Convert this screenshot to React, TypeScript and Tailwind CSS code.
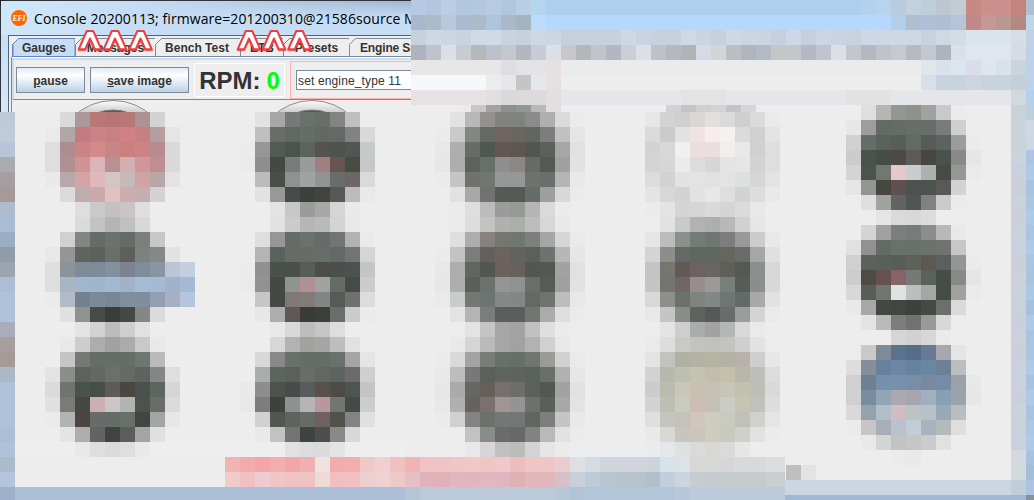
import React from "react";

const CELL = 15;

type Band = [x: number, y: number, colors: string];

// Builds one band per line. "-" leaves a cell empty, "color*n" repeats a colour.
const block = (x: number, y: number, text: string): Band[] =>
  text
    .trim()
    .split("\n")
    .map((line, i): Band => [x, y + i * CELL, line.trim()]);

const panelBands: Band[] = [
  ...block(0, 112, `
bdc9d9
c0cbd8
b8c5d9
aaabb1
a79ea2
a69a98
adbbce
a8bcd4
9cacc2
919da6
9aa5af
adbdd5
afc2d9
afc2da
abacb9
a79ea0
a69a98
adb8c7
afc2da
afc2da
afc2da
acbed5
afc2da eeeeee*26
a9bbcc
b3c4dc
9eb0ca abc0d6*26 b4c5d7 bbcada*9 b6c8d8 b0c4d6 b3c5d8*6 b6c8d9 bbcbdb*8`),
  ...block(45, 112, `
- d9d9d9 ac9896 b87878 b87474 ba7777 ae9193 d3d3d3 -
eaeaea b0a8a8 c37d80 cc8286 c88082 ce8285 c77f80 b59ea0 e5e5e5
dedede ae8c90 ca8486 d48a8b c68587 cd7f7e cb8385 b98b8e d9d9d9
dedede b09193 d19294 d9b5b9 ba9192 d3afb2 d09698 be8e90 d9d9d9
e9e9e9 b5aaa9 d3a3a5 ddb9bd d3c4c6 c5bab8 d0a3a5 b9a6a7 e3e3e3
- dadada beadaf cda8ab e3c0c1 ccaeb0 c3afb1 d3d3d3 -
- - dedede c9c9c7 c5bfbf cac5c4 dedede - -
- - dadada c3c3c3 b4b4b4 c0c0c0 d8d8d8 - -
- d0d0d0 838583 656c66 6b726d 656b66 7c7f7a c7c7c7 -
e8e8e8 959595 5f645f 5c615b 686e69 5b605b 7e8181 868886 e2e2e2
dedede 8c949a 7e8b99 7d8b98 82909f 7c8290 7f8d9a 8896a2 bac6d5 c3cfe0
dedede a8b5c2 a3b6d0 a1b5c8 a3b8d1 a0b3c7 a6bbd4 a6bbd3 a1b2c9 a3b9d5
ebebeb b3bac8 748290 7c8999 778797 808f9e 7f8e9c 959fb2 a5b1c2 b4c5dd
- e0e0e0 909290 474c48 393d39 474845 858785 dbdbdb -
- - e3e3e3 d2d2d2 bcbcbc cfcfcf e1e1e1 - -
- e9e9e9 cdcdcd adadad a1a3a2 ababab c9c9c9 e9e9e9 -
- c5c5c5 757874 666d68 666d68 666d68 6f7570 bababa -
e3e3e3 8c8e8c 5c625d 636863 6b706a 646b66 5d635e 858786 dedede
dbdbdb 70736f 4a524d 464e4a 605b59 4b4740 4a524d 5d6560 d5d5d5
e0e0e0 787b77 434843 ccafb2 cdc4c6 b1b4b3 4c524d 6a6c69 dadada
ebebeb b3b3b3 4c4541 686b67 656d68 687069 414641 a3a5a4 e7e7e7
- e4e4e4 adadad 616463 3f4440 5c5d5c a4a4a4 e0e0e0 -
- - e9e9e9 dedede dadada dedede e9e9e9`),
  ...block(240, 112, `
- e2e2e2 a6a6a6 777978 6a716c 676e69 828481 bfbfbf ececec
- bfbfbf 6a6c69 616763 656b66 626864 636964 818281 d9d9d9
ebebeb 969696 535955 4c534e 5c625e 55534e 4d544f 505651 c5c9c8
eaeaea 8e8e8e 434944 777e7a 9a9c9b a07f82 665552 464b44 c7c7c7
- bcbcbc 484d48 8e9391 9fa3a2 909594 696c6a 6c6664 dadada
- e2e2e2 979999 474c48 3b403b 3f443f 575856 bbbbbb e9e9e9
- - e4e4e4 c7c7c7 9b9b9b a7a7a7 d5d5d5 e9e9e9 -
- - e2e2e2 cbcbcb b6b6b6 bababa d4d4d4 e8e8e8 -
- dedede 969696 656b66 6b726e 666d68 727473 b2b2b2 eaeaea
- b4b4b4 5b625d 666c67 686c65 676e69 636965 737473 d5d5d5
ebebeb 909090 4a514c 494f4b 575d59 4e4d46 4a504b 4c524d c5c5c5
eaeaea 929292 444944 8f9493 b09193 a1a3a2 656c67 474b47 cccccc
- c6c6c6 444944 827876 827b77 808684 555b56 6f716f dcdcdc
- e7e7e7 adadad 5d5855 373c37 3a3f3a 6b6d6b cbcbcb ebebeb
- - e8e8e8 d9d9d9 bdbdbd c6c6c6 dedede - -
- - d7d7d7 b2b2b2 a1a3a0 a5a6a4 bebebe e1e1e1 -
- d8d8d8 888888 67706b 656d68 666d68 6a716c a5a5a5 e5e5e5
- abadac 5d635e 5a605b 686d66 626760 5d645f 6a6b6a cfcfcf
e9e9e9 8d8d8d 4c524d 474c48 5a5b5c 58504b 4c4b45 4e544f c4c4c4
e8e8e8 7d7d7e 3d423e 8d9291 b5b5b6 b8989b 707671 464a45 cdcdcd
- d1d1d1 545652 5d635e 656c67 6f6161 51514b 828483 e0e0e0
- e9e9e9 c2c2c2 727471 3e433f 4c4f4c 8b8886 d8d8d8 -
- - - e1e1e1 dcdcdc dbdbdb e4e4e4 - -`),
  ...block(435, 112, `
- e2e2e2 b8b8b8 92918f 838280 7f827e 8a8c89 afafaf dadada ebebeb
ebebeb c9c9c9 838682 656865 706462 686661 606661 7c7e7d c1c1c1 e5e5e5
e8e8e8 aeaeae 666d68 505650 635754 5e5751 51564f 5a605b a6a6a6 e1e1e1
e7e7e7 adadad 5c625d 686f6a 8f8e8c 8b8785 686a66 545954 9fa19f e2e2e2
ebebeb c5c5c5 70726e 707772 949998 939897 6c736e 696f6a b4b6b5 e9e9e9
- e1e1e1 a8a8a8 70736f 555a55 545953 666c67 9f9e9e d8d8d8 ebebeb
- ebebeb dedede bcbcbc 9a9c99 979997 b5b5b5 dadada ebebeb -
- ebebeb dcdcdc c3c3c3 b0b0b0 acaeab bdbdbd d7d7d7 e9e9e9 -
- dfdfdf adadad 878280 757672 707671 7d807d a4a6a3 d6d6d6 eaeaea
ebebeb c3c3c3 7b7d7b 62605b 6c625e 63635d 5a605b 6d736e b6b8b7 e6e6e6
e8e8e8 adadad 606661 525751 6b615e 68605c 535751 545851 a1a3a0 e1e1e1
e7e7e7 aeaeae 595f59 6c736f 959595 8e9290 686e69 565b54 9fa19e e2e2e2
eaeaea c8cccb 747772 6e7473 848988 828886 636a64 70736f bdbdbd e8e8e8
- e3e3e3 b4b4b4 7b7d7b 595f5a 595f5a 717470 ababab dedede ebebeb
- - e3e3e3 c5c5c5 a6a6a6 a2a3a2 c1c1c1 dfdfdf ebebeb -
- e9e9e9 d5d5d5 bababa a5a6a5 a1a3a0 b2b2b2 d0d0d0 e8e8e8 -
ebebeb d9d9d9 a3a3a3 787b77 67706b 666e69 6f7571 999b97 d1d1d1 eaeaea
e9e9e9 bdbdbd 777877 5b605b 60645f 5e635e 5b615c 696f6a b1b1b1 e7e7e7
e7e7e7 aaaaaa 666761 665e5b 77706c 6f6d69 5b605c 535852 a1a3a0 e2e2e2
e8e8e8 b0b0b0 656260 7a706e 9e9594 949592 6b716c 5a5f59 a8a8a8 e3e3e3
ebebeb d0d0d0 828481 6b726d 727876 717774 61665f 7c7f7b c5c5c5 e9e9e9
- ececec c2c2c2 898c88 6a6b6b 676868 808381 b7bab9 e1e1e1 ebebeb
- - e8e8e8 d9d5d6 c0c0c0 bcbcba d4d4d4 e6e6e6 ebebeb eaecef*6`),
  ...block(405, 442, `
eeebec*2`),
  ...block(645, 112, `
e7e7e7 d3d3d3 cfcfcf dbd6d5 e1e0dd dadada cfcfcf dbdbdb eaeaea
dadada cbcbcb e2e2e2 f1e3e3 f8edec f3f2ef dadada d0d0d0 e3e3e3
d3d3d3 d7d7d7 f0f0f0 ecdedf e9dee0 f0efed e8e8e8 d0d0d0 dedede
d4d4d4 d6d6d6 ebebeb dedbdc d8d5d6 e5e4e2 e6e6e6 d3d3d3 dedede
dcdcdc d2d2d2 e2e2e2 e1e4e3 dfe2e1 e2e4e3 dce0de d6d6d6 e3e3e3
e4e4e4 d7d7d7 d3d3d3 e2e2e2 e7e7e7 dedede d3d3d3 dddddd e9e9e9
ebebeb e4e4e4 d4d4d4 d5d5d5 d9d9d9 d4d4d4 dbdbdb e8e8e8 -
ececec e2e2e2 c6cac9 b2b2b2 abafad b8b8b8 d1d1d1 e6e6e6 ececec
e5e5e5 bcbcbc 8c8f8b 757b77 707672 7c7e7d 999999 cccccc e8e8e8
d4d4d4 8b8e8b 636965 606662 606661 65665f 6a6c69 a5a7a6 e0e0e0
c4c4c4 75776f 615a57 6c625f 686663 5d6059 545952 8c8f8d d7d7d7
c5c5c5 757472 716667 988d8c 9b9a98 777f7a 565c57 8b8e8a d8d8d8
d9d9d9 8d8f8b 6b716c 7e8580 828886 6f7574 646a68 a9a9a9 e2e2e2
e8e8e8 c5c5c5 898c88 5d635f 555a56 6a6c6b 9b9d9c d4d4d4 eaeaea
- e4e4e4 cecece abadad a2a2a3 b5b7b7 d9d9d9 eaeaea -
eaeaea dddddd cac9c6 c3c2bd c1c0ba c4c3bd cfcfcd e2e2e2 ececec
e3e3e3 c2c3bf b0b0a5 b3b2a5 b5b4a3 b4b2a2 b6b1ab cecece e7e7e7
d3d3d3 b7b8ae bebfae c4c2b0 c1bfac c3c0ac b9b7a9 bebfb9 dcdcdc
cccccc bbbbaf c7c8b8 c8c0b1 c4c1b2 c7c5b5 c3c1ae bdbeb8 d9d9d9
d3d3d3 bebeb4 c9cbbd cebbb4 c6bfba cbccc3 c4c5b4 c1c1bb dddddd
dfdfdf c4c5bf c5c2b7 d1c6bb cfcdc0 c9cac0 c1c1b7 d0d0cd e5e5e5
e9e9e9 d8d8d6 c8c4c0 cbc6bd cecdbf c9c9c1 cfcfcb e1e1e1 ebebeb
e9ecee e5e8ea dde1e1 dadad8 d7d8d4 dadad8 e6e6e6 ededed ededed`),
  ...block(225, 457, `
f0b4b5 f2acad f4a5a7 f3adad f4a5a7 f0b0b2 efe3e2 f3abac f2afb0 efc9c9 efcfd1 f0c1be f0b3b6 efc3c6 efc3c6 efc6c6 f0c8c6 efc6c6 eec8ca eebdbe efc5c6 efc5c6 e9cbd0 dfdfe4 d5dbe2 d0d5dc d0d4dc*2 cdd4db d8e2e9 dde1e8 d7d7d7*2 d6d6d6 d9d9d9*2 dcdddd*2
efcbcb f0c1c4 eecbd0 efc6c5 f0c2c3 efc3c3 efdada f0bfc1 f0c0c2 eecfcf efd1d3 efc9c8 e5c1c7 e1b2bb e1b0b9 e1b6be e1b5bd e0b8be e0b7bf dfb0b4 e1b7bc e1b7bc d8c0c8 cbcfdb bdcad7 b9c5d1 b8c3cd b6c3cd b3bfcb c1cfdc ccd4de c8ccce c7cbcf c5cacc c8cbce c6cacd cbced1*2`),
];

const sideBands: Band[] = [
  ...block(411, 0, `
b5cae2 b3c6df b9cee3 b2c7df b1c8df b7cae2 b1c7e0 b9cee2 b5d4f0 b0cfec*21 b3d2ee b7d4ef b9cbde c3d1df bfcedb bec6d1 c3cbd5 c88883 cb908b*2 c4837c b2bfd0
a7b9cd abbbca b9c8da abbacf abbbca b0c5dc abb8cb a4b4c3 bbdbfa b6d8fc*23 b1cfea afbfd1 afc0d8 b0bed3 b5c4d9 bd8a89 c59896 ba9790 b48984 bfd5e8
c6d1dc cdd8e5 ccd6e1 c8d3df cfdae5 cfdae5 c9d3df c5d1db ccd8e5 cad6e2 c5d0da c5d1dc*3 cdd8e4 c9d4e2 c5d1dc*2 cdd9e5 c9d5e1 c4d0dc ccd8e4 cbd6e0 cad5e0 c4d0df ccd8e5 c4cfdf cad6e3 c8d4e2 c6d2dd ccd8e5 cbd8e4 ccd8e4*2 c6d2dc cdd9e3 d1dce3 dbe4eb*3 d6dde4 bfd2e5
aeb3bd bfc2cc dcdfe8 c8ccd0 b4b9bd bcc1cb c6c7cc b4b7c2 c7cbd5 dcdfe8 c7c7cd b4b8bd c3c4c9 b3b7c2 cbced7 dcdfe8 bdc1cc b5b9bf b1b3b7 d4dbe3 d2d4d8 bbbec3 b2b5bb b4bac4 c5c6ca*2 b5b8c3 c0c4ce dcdfe8 c5c6cb b5b8c3 c0c3c8 c5cad0 b7bac0 c3c7d0 adb3bf dcdfe8 e1e5ee*3 d7dbe3 bfd2e5
e8e6e7*6 dfdde1 e3e2e6*2 e6e0e3 e9ebed*24 e0e6ea dae1e9 dce5ef d9dde7 e0e4ed d9e2e9 cbd3dc bdd1e9
f5f7fa*5 eaecee e5e8eb c7c5c3 e5e8ea e6e0e3 ededed*24 d8dfe8 c7d4e0*2 ced5e1 c7d4e0*2 c3cfd9 bdd1e9
e6e2e4*5 e3dfe1 dad9da ddd8db dcdadc e3dfe1 e4e6e9*8 e2e3e5*3 e4e6e9*8 e0e2e4*3 e4e6e9*8 d2d9dc b5d0ea
-*3 ebebeb c7c7c7 a2a3a1 8c8f8b 949693 b8b8b8 e3dfe0 -*7 d2d2d2 c3c3c3 cfcfcf d3d3d3 c4c4c4 d6d6d6`),
  ...block(846, 105, `
- dfdfdf b5b5b5 939695 8f918d a3a2a3 c9c9c9 ebebeb -
e7e7e7 9d9d9d 636963 656b66 676d68 676e69 797b7a cfcfcf -
d1d1d1 666c67 5b615c 575d58 636964 565c57 5c625d 9c9c9c ebebeb
cccccc 4b514c 454d49 4b4a45 5e5a59 47473f 4b524d 888a88 e6e6e6
d4d4d4 4c524e 717873 e6c7cb cbcdcc adb1b1 464b45 959796 eaeaea
e6e6e6 949694 474740 60504f 4c534e 4d544f 595a58 d3d3d3 -
- dfdfdf a2a2a1 626463 505651 828181 cbcbcb ebebeb -
- - e5e5e5 dadada d8d8d8 dcdcdc - - -
- d4d4d4 a1a1a1 7d7f7f 797b7a 8c8e8b b8b8b8 e9e9e9 -
e1e1e1 919191 646a65 6a716c 69706b 6b726d 707370 c7c7c7 -
d0d0d0 5b615c 595f5a 575d58 5d6159 5d5852 5a605c 949695 ebebeb
cdcdcd 4e4a45 655250 856366 767975 5b615c 464d48 878a87 e5e5e5
d8d8d8 575d58 6f7672 dfe3e2 bbc0be a3a7a6 454b45 a1a1a2 eaeaea
e9e9e9 a8a8a8 434843 414641 3d423d 454a45 6c6f6c dadada -
- e3e3e3 bababa 7c7e7d 70736f 999999 d8d8d8 ececec -
- - ececec d5d5d5 d1d1d1 d7d7d7 eaeaea - -
ececec c9c9c9 7e8a97 5c728c 546d88 687a92 a5a8ae e5e5e5 -
dddddd 858f99 65819b 6d87a3 67829f 6a86a1 6c8196 bdbec0 -
d0d0d0 6e8191 7690ac 7691ab 788da8 7889a1 768ca6 9aa1a8 e8e8e8
d0d0d0 788d9f 93a5b7 aba8b4 a7a5b0 a1afbf 899fb6 9ca4ab e7e7e7
d9d9d9 97a1aa afbecb d3bbc2 bbc3c7 b7c1c9 98a8b7 b9bdbf ececec
ebebeb c6c6c6 a9adb7 bbc0ca c1cdd7 a9b3bd b4b9bc dedede -
- e9e9e9 d4d4d4 c2c3c5 c3c7c8 cbcbcd e1e1e1 - -
- - - ebebeb e9e9e9 - - - -`),
  ...block(786, 465, `
c0bfbd e1e3e5
ccd6e1*15 c0cdda abc5e0
a1b8d4*16 85919f`),
  ...block(1011, 105, `
c9d1da c0cfdc
ccd2da ced7e2
cbd2da cdd7e2
cbd3dc adc5e2
c9d2dc aecae4
cccfda abc3de
cad2dc adc6e0
cacfda aecae4
c9d3dc acc4df
cbd1dc aecae4
cacfda aac4e2
cbd2dc aac4de
cad2dc adc8e3
c9d1da a8c1da
cacfdb aecae4
cbd2dc abc4df
cacfda aac6e4
cbd1dc aecae4
c9d1da a9c2de
cacfdb aecae4
cad2dc aac4df
cbd1da adc8e4
c9d1dc aecae4
d3dade a9c3df
d3dade a6bdd6`),
];

function expand(colors: string): string[] {
  return colors.split(/\s+/).flatMap((token) => {
    const [color, count] = token.split("*");
    return Array<string>(count ? Number(count) : 1).fill(color);
  });
}

function Cells({ bands }: { bands: Band[] }) {
  return (
    <>
      {bands.flatMap(([x, y, colors], b) =>
        expand(colors).map((color, i) =>
          color === "-" ? null : (
            <rect key={`${b}-${i}`} x={x + i * CELL} y={y} width={CELL} height={CELL} fill={`#${color}`} />
          ),
        ),
      )}
    </>
  );
}

function EfiLogo() {
  return (
    <svg viewBox="0 0 16 16" className="size-4 shrink-0">
      <circle cx="8" cy="8" r="8" fill="#ff6600" />
      <text x="8" y="11" textAnchor="middle" fontFamily="Liberation Serif, serif" fontStyle="italic" fontWeight="bold" fontSize="8.5" fill="#fff" textLength="13" lengthAdjust="spacingAndGlyphs">
        EFI
      </text>
    </svg>
  );
}

function Carets({ className }: { className: string }) {
  return (
    <svg viewBox="0 0 78 25" className={`absolute h-[25px] w-[78px] ${className}`}>
      {[14, 39, 64.5].map((cx) => (
        <path
          key={cx}
          transform={`translate(${cx} 0)`}
          d="M-3.2 3H3.2L11.3 21.3H4.9L0 10.5L-4.9 21.3H-11.3Z"
          fill="#fff"
          stroke="#ee3e42"
          strokeWidth="2"
          strokeLinejoin="round"
          style={{ filter: "drop-shadow(0 1px 0.5px #e03035aa)" }}
        />
      ))}
    </svg>
  );
}

function Tab({ label, width, selected = false }: { label: string; width: string; selected?: boolean }) {
  return (
    <div
      className={`relative flex shrink-0 items-center justify-center border-t border-r ${width} ${
        selected
          ? "h-[19px] border-l border-b border-[#6382bf] bg-[#c8ddf2] shadow-[inset_1px_0_#98b4dc,inset_-1px_0_#98b4dc]"
          : "h-[19px] border-b border-[#7a8a99] bg-[#eeeeee]"
      }`}
    >
      <svg viewBox="0 0 7 7" className="absolute -top-px -left-px size-[7px]">
        <path d="M0 0H7L0 7Z" fill="#eee" />
        <path d="M0.5 6.5L6.5 0.5" stroke={selected ? "#6382bf" : "#7a8a99"} />
      </svg>
      <span className="whitespace-nowrap">{label}</span>
    </div>
  );
}

function PushButton({ mnemonic, rest, width }: { mnemonic: string; rest: string; width: string }) {
  return (
    <button
      className={`h-[26px] shrink-0 border border-[#7a8a99] bg-linear-to-b from-[#dfe9f4] via-white via-30% to-[#bcd2e7] pt-0.5 text-xs font-bold ${width}`}
    >
      <span className="underline">{mnemonic}</span>
      {rest}
    </button>
  );
}

function GaugeCap({ className }: { className: string }) {
  return (
    <svg viewBox="0 0 76 12" className={`h-3 w-[76px] shrink-0 ${className}`}>
      <defs>
        <linearGradient id="rim" x1="0" y1="0" x2="0" y2="12" gradientUnits="userSpaceOnUse">
          <stop offset="0" stopColor="#fff" />
          <stop offset="1" stopColor="#cfcfcf" />
        </linearGradient>
      </defs>
      <circle cx="38" cy="57.5" r="57" fill="url(#rim)" stroke="#8c8c8c" />
      <circle cx="38" cy="56.5" r="46.5" fill="#555a57" stroke="#777" />
    </svg>
  );
}

function ConsoleWindow() {
  return (
    <section className="relative h-28 w-[411px] shrink-0 overflow-hidden bg-[#20242c]">
      <div className="flex h-full w-[411px] flex-col rounded-tl-lg border-t border-l border-[#30343c] bg-linear-to-b from-[#9fb6cf] via-[#c4dcf4] via-15% to-[#d5e8f8]">
        <div className="flex h-[34px] items-center gap-[7px] bg-linear-to-r from-[#cfe8f8] via-[#c6def5] via-30% to-transparent pl-2.5">
          <EfiLogo />
          <h1 className="whitespace-nowrap pt-px font-['Open_Sans',sans-serif] text-[14px] tracking-[0.07px] text-black">
            Console 20200113; firmware=201200310@21586source M
          </h1>
        </div>
        <div className="ml-[7px] flex min-h-0 flex-1 flex-col border-t border-l border-[#4e647c] bg-[#eeeeee] text-[#333]">
          <div className="flex h-[21px] shrink-0 items-end pl-[3px] text-xs font-bold">
            <Tab label="Gauges" width="w-16" selected />
            <Tab label="Messages" width="w-20" />
            <Tab label="Bench Test" width="w-[85px] pr-0.5" />
            <Tab label="ETB" width="w-[43px]" />
            <Tab label="Presets" width="w-[66px]" />
            <div className="relative flex h-[19px] w-[64px] items-center border-t border-b border-[#7a8a99] pl-2.5 tracking-[-0.15px]">
              <svg viewBox="0 0 7 7" className="absolute -top-px -left-px size-[7px]">
                <path d="M0 0H7L0 7Z" fill="#eee" />
                <path d="M0.5 6.5L6.5 0.5" stroke="#7a8a99" />
              </svg>
              <span className="whitespace-nowrap">Engine Sn</span>
            </div>
          </div>
          <div className="ml-0.5 flex min-h-0 flex-1 flex-col border-l border-[#7a8a99]">
            <div className="h-px shrink-0 bg-white" />
            <div className="h-0.5 shrink-0 bg-[#c8ddf2]" />
            <div className="flex h-[40px] shrink-0 items-center gap-1.5 border-b border-l-2 border-b-[#7a8a99] border-l-[#c8ddf2] pl-0.5">
              <PushButton mnemonic="p" rest="ause" width="w-[69px]" />
              <PushButton mnemonic="s" rest="ave image" width="w-[99px] -ml-px" />
              <div className="-ml-px flex h-[34px] w-[91px] shrink-0 items-center justify-center gap-1.5 border border-white pt-0.5 text-2xl font-bold">
                <span>RPM:</span>
                <span className="text-[#00ff00]">0</span>
              </div>
              <div className="-ml-px flex h-[38px] w-[121px] shrink-0 items-center border border-r-0 border-[#ffafaf] pl-[5px]">
                <div className="flex h-5 w-[115px] items-center border border-r-0 border-[#7a8a99] bg-white pt-0.5 pl-px text-[12px] tracking-[0.14px] whitespace-nowrap">
                  set engine_type 11
                </div>
              </div>
            </div>
            <div className="flex pl-[63px]">
              <GaugeCap className="" />
              <GaugeCap className="ml-[123px]" />
            </div>
          </div>
        </div>
      </div>
      <Carets className="top-[28px] left-[76px]" />
      <Carets className="top-[28px] left-[234.5px]" />
    </section>
  );
}

export default function App() {
  return (
    <main className="flex h-[500px] w-[1034px] flex-col overflow-hidden bg-[#ededed] font-['Liberation_Sans',sans-serif]">
      <div className="flex h-28">
        <ConsoleWindow />
        <svg viewBox="411 0 623 112" shapeRendering="crispEdges" className="h-28 w-[623px] shrink-0">
          <Cells bands={sideBands} />
        </svg>
      </div>
      <svg viewBox="0 112 1034 388" shapeRendering="crispEdges" className="h-[388px] w-[1034px] shrink-0">
        <Cells bands={panelBands} />
        <rect x="785" y="112" width="249" height="368" fill="#ededed" />
        <rect x="785" y="480" width="249" height="15" fill="#ccd6e1" />
        <rect x="785" y="495" width="249" height="5" fill="#a1b8d4" />
        <Cells bands={sideBands.filter(([x, y]) => y >= 105 && x >= 785)} />
      </svg>
    </main>
  );
}
